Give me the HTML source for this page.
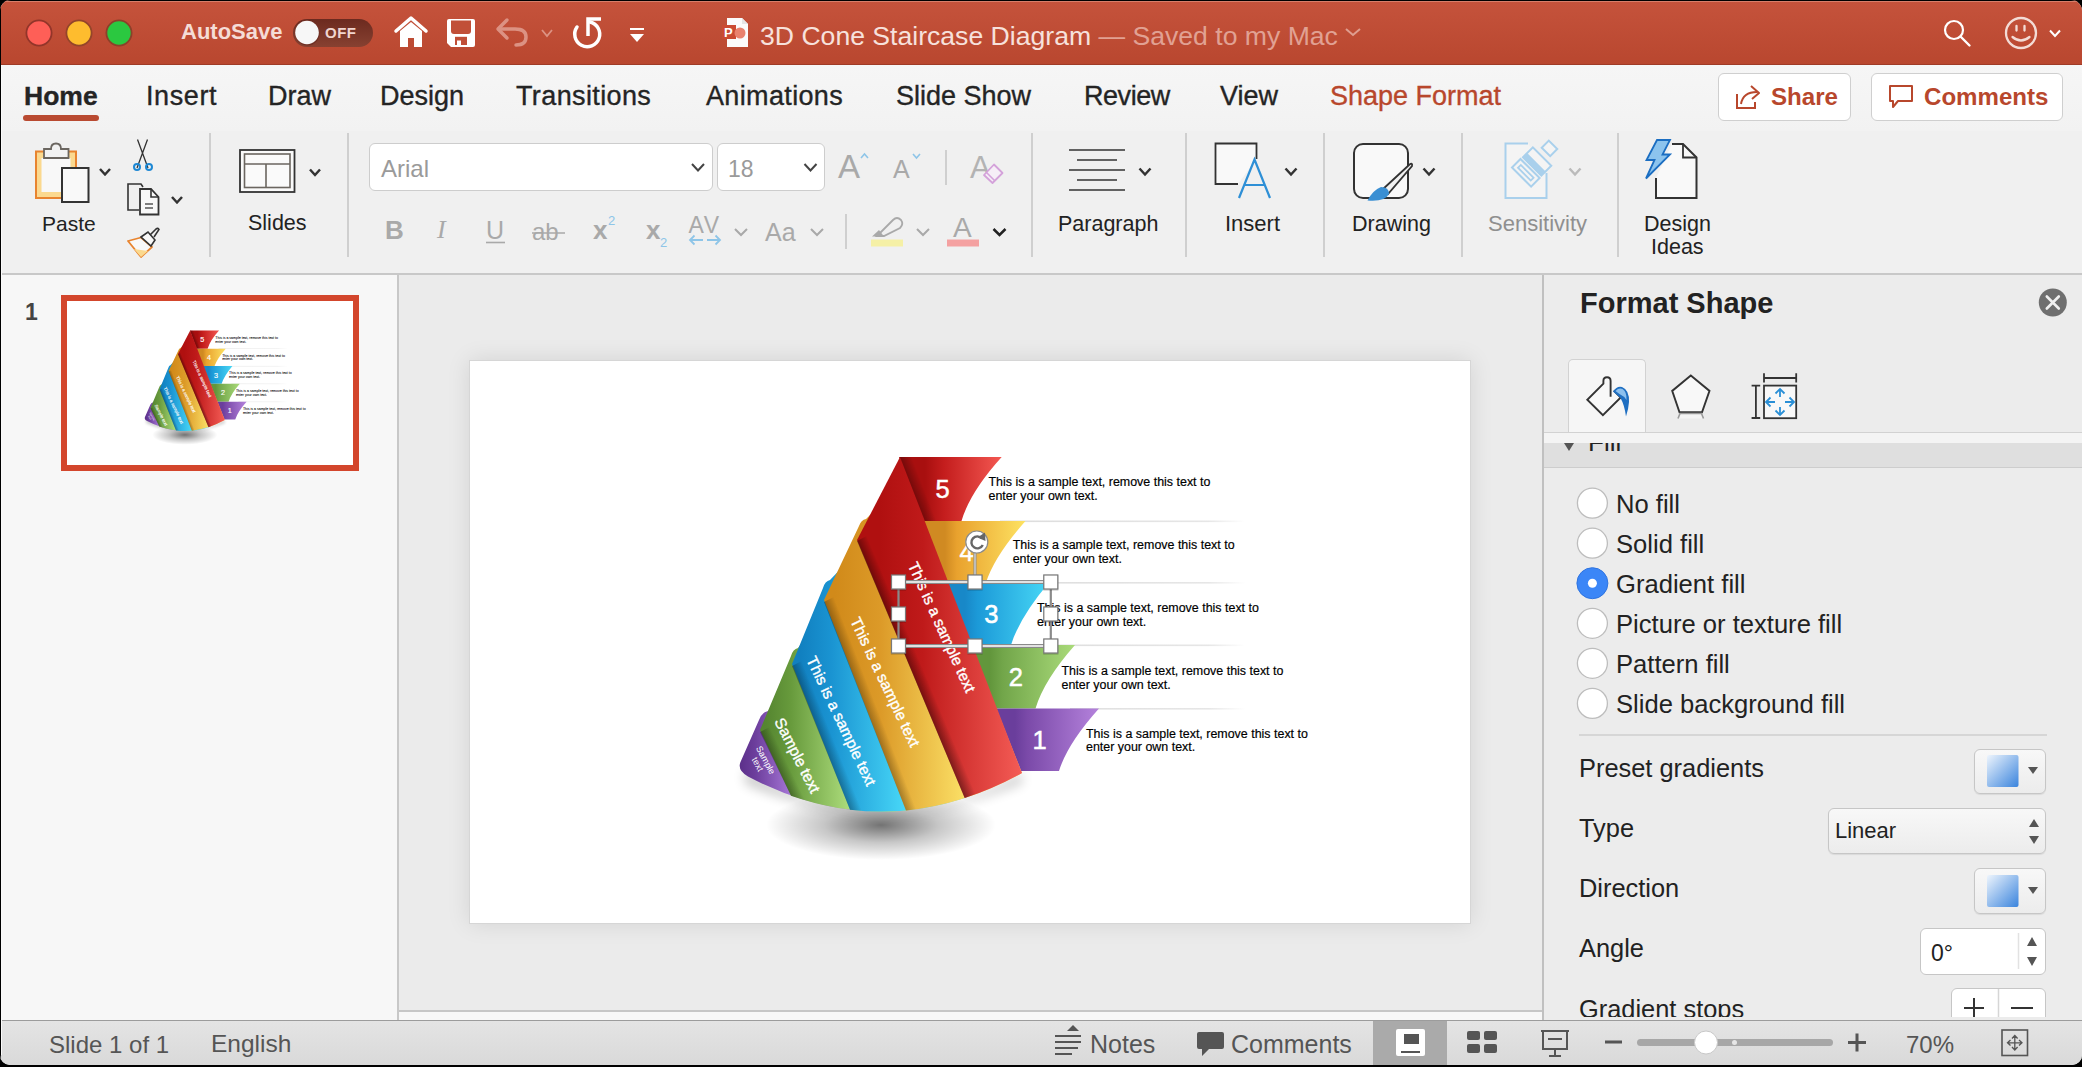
<!DOCTYPE html>
<html><head><meta charset="utf-8">
<style>
*{margin:0;padding:0;box-sizing:border-box}
html,body{width:2082px;height:1067px;overflow:hidden;background:#000;font-family:"Liberation Sans",sans-serif}
.a{position:absolute}
.t{position:absolute;white-space:nowrap;line-height:1}
svg{position:absolute;overflow:visible}
#win{position:absolute;left:0;top:0;width:2082px;height:1065px;border-radius:11px 11px 10px 10px;overflow:hidden;background:#f3f3f3}
#title{left:0;top:0;width:2082px;height:65px;background:linear-gradient(#c5533c,#b9472f);box-shadow:inset 0 1px 0 #000, inset 0 2px 0 #d77e6a;border-bottom:1px solid #9f3b27}
#tabs{left:0;top:65px;width:2082px;height:66px;background:linear-gradient(#f6f6f6,#f2f2f2)}
#ribbon{left:0;top:131px;width:2082px;height:144px;background:#f0f0f0;border-bottom:2px solid #c8c8c8}
#left{left:0;top:275px;width:399px;height:745px;background:#f7f7f7;border-right:2px solid #c8c8c8}
#canvas{left:399px;top:275px;width:1143px;height:745px;background:#ebebeb}
#right{left:1542px;top:275px;width:540px;height:745px;background:#ececec;border-left:2px solid #c0c0c0}
#status{left:0;top:1020px;width:2082px;height:45px;background:linear-gradient(#e4e4e4,#d9d9d9);border-top:1px solid #9c9c9c}
.tab{font-size:27px;color:#242424;top:83px;-webkit-text-stroke-width:0.35px}
</style></head><body>
<div id="win">
<div id="title" class="a"></div>
<!-- TITLE BAR -->
<svg style="left:0;top:0" width="2082" height="65">
 <circle cx="39" cy="33" r="12.6" fill="#fe5f57" stroke="#93352a" stroke-width="1.8"/>
 <circle cx="79" cy="33" r="12.6" fill="#febc2e" stroke="#94452a" stroke-width="1.8"/>
 <circle cx="119" cy="33" r="12.6" fill="#2bc840" stroke="#8c402a" stroke-width="1.8"/>
 <!-- toggle -->
 <defs><linearGradient id="tg" x1="0" y1="0" x2="0" y2="1"><stop offset="0" stop-color="#6c2a1f"/><stop offset="1" stop-color="#874131"/></linearGradient></defs>
 <rect x="293" y="19" width="80" height="28" rx="14" fill="url(#tg)"/>
 <circle cx="307.5" cy="33.5" r="12" fill="#5a2018" opacity=".5"/>
 <circle cx="307" cy="32.5" r="11.8" fill="#f7f7f7"/>
 <!-- home -->
 <path d="M396 31 L411 18 L426 31" fill="none" stroke="#fff" stroke-width="3.5" stroke-linecap="round" stroke-linejoin="round"/>
 <path d="M400 31 L411 22 L422 31 V47 H414 V38 H408 V47 H400 Z" fill="#fff"/>
 <!-- save -->
 <path d="M449 19 H473 Q475 19 475 21 V45 Q475 47 473 47 H451 L447 43 V21 Q447 19 449 19 Z" fill="#fff"/>
 <path d="M451 20.5 H471 V31 Q471 34 468 34 H454 Q451 34 451 31 Z" fill="#c14f38"/>
 <path d="M455 36.8 H467 V45 H455 Z" fill="#c04e37"/>
 <path d="M457 40.5 H461 V45 H457 Z" fill="#fff"/>
 <!-- undo -->
 <path d="M507 20 L498 29 L507 38" fill="none" stroke="#dc9283" stroke-width="3.5" stroke-linecap="round" stroke-linejoin="round"/>
 <path d="M499 29 H515 Q526 29 526 37 Q526 45 516 45" fill="none" stroke="#dc9283" stroke-width="3.5" stroke-linecap="round"/>
 <path d="M542 30 L547 36 L552 30" fill="none" stroke="#dc9283" stroke-width="1.8"/>
 <!-- redo circular -->
 <path d="M577 27 A 12.5 12.5 0 1 0 590 22" fill="none" stroke="#fff" stroke-width="3.5" stroke-linecap="round"/>
 <path d="M588 36 V19 H601" fill="none" stroke="#fff" stroke-width="3.5" stroke-linejoin="miter"/>
 <!-- customize -->
 <rect x="630" y="28" width="14" height="2" fill="#fff"/>
 <path d="M630 34 H644 L637 42 Z" fill="#fff"/>
 <!-- ppt doc icon -->
 <path d="M727 18 H742 L748 24 V47 H727 Z" fill="#fbfbfb"/>
 <path d="M742 18 V24 H748" fill="#e5e5e5"/>
 <rect x="722" y="25" width="14" height="14" fill="#cb4a32"/>
 <circle cx="740" cy="33" r="5.5" fill="#e9826e"/>
 <!-- search -->
 <circle cx="1954" cy="30" r="9" fill="none" stroke="#fff" stroke-width="2.2"/>
 <path d="M1960.5 36.5 L1969.5 45.5" stroke="#fff" stroke-width="2.4" stroke-linecap="round"/>
 <!-- smiley -->
 <circle cx="2021" cy="33" r="15" fill="none" stroke="#f3dcd6" stroke-width="2.3"/>
 <path d="M2016.5 26 V30.5 M2024.5 26 V30.5" stroke="#f3dcd6" stroke-width="2.3" stroke-linecap="round"/>
 <path d="M2012.5 37 Q2021 44 2029.5 37" fill="none" stroke="#f3dcd6" stroke-width="2.3" stroke-linecap="round"/>
 <path d="M2050 30.5 L2055 36 L2060 30.5" fill="none" stroke="#fff" stroke-width="2"/>
 <path d="M1346 29 L1353 35 L1360 29" fill="none" stroke="#df9e90" stroke-width="2"/>
</svg>
<div class="t" style="left:181px;top:21px;font-size:22px;font-weight:bold;color:#f5dcd6">AutoSave</div>
<div class="t" style="left:325px;top:25px;font-size:15px;font-weight:bold;color:#f0d5cf;letter-spacing:0.5px">OFF</div>
<div class="t" style="left:727px;top:733px;font-size:13px;font-weight:bold;color:#fff;left:724px;top:26px">P</div>
<div class="t" style="left:760px;top:22.5px;font-size:26.6px;color:#f7e1dc">3D Cone Staircase Diagram <span style="color:#e1a193">— Saved to my Mac</span></div>

<div id="tabs" class="a"></div>
<!-- TABS -->
<div class="t tab" style="left:24px;font-weight:bold;font-size:26.5px">Home</div>
<div class="a" style="left:23px;top:115px;width:76px;height:6px;border-radius:3px;background:#b94a31"></div>
<div class="t tab" style="left:146px;letter-spacing:0.6px">Insert</div>
<div class="t tab" style="left:268px">Draw</div>
<div class="t tab" style="left:380px">Design</div>
<div class="t tab" style="left:516px;letter-spacing:0.38px">Transitions</div>
<div class="t tab" style="left:706px;letter-spacing:0.35px">Animations</div>
<div class="t tab" style="left:896px">Slide Show</div>
<div class="t tab" style="left:1084px;letter-spacing:-0.45px">Review</div>
<div class="t tab" style="left:1220px">View</div>
<div class="t tab" style="left:1330px;color:#b8472c">Shape Format</div>
<div class="a" style="left:1718px;top:73px;width:133px;height:48px;border:1.5px solid #cfcfcf;border-radius:6px;background:#fff"></div>
<div class="a" style="left:1871px;top:73px;width:192px;height:48px;border:1.5px solid #cfcfcf;border-radius:6px;background:#fff"></div>
<div class="t" style="left:1771px;top:84.6px;font-size:24.1px;font-weight:bold;color:#b8472c">Share</div>
<div class="t" style="left:1924px;top:84.6px;font-size:24.1px;font-weight:bold;color:#b8472c">Comments</div>
<svg style="left:0;top:0" width="2082" height="140">
 <path d="M1737 94 V108 H1755 V102" fill="none" stroke="#b8472c" stroke-width="2"/>
 <path d="M1741 104 Q1743 92 1757 92" fill="none" stroke="#b8472c" stroke-width="2"/>
 <path d="M1751 86 L1759 93 L1752 99" fill="none" stroke="#b8472c" stroke-width="2" stroke-linejoin="round"/>
 <path d="M1890 86 H1912 V101 H1898 L1893 107 V101 H1890 Z" fill="none" stroke="#b8472c" stroke-width="2" stroke-linejoin="round"/>
</svg>

<div id="ribbon" class="a"></div>
<!-- RIBBON -->
<div class="t" style="left:42px;top:213.2px;font-size:21px;color:#222;font-weight:normal;">Paste</div>
<div class="t" style="left:248px;top:212.8px;font-size:21.5px;color:#222;font-weight:normal;">Slides</div>
<div class="t" style="left:1058px;top:213.8px;font-size:21.5px;color:#222;font-weight:normal;">Paragraph</div>
<div class="t" style="left:1225px;top:213.4px;font-size:22px;color:#222;font-weight:normal;">Insert</div>
<div class="t" style="left:1352px;top:213.8px;font-size:21.5px;color:#222;font-weight:normal;">Drawing</div>
<div class="t" style="left:1488px;top:213.4px;font-size:22px;color:#8f8f8f;font-weight:normal;">Sensitivity</div>
<div class="t" style="left:1644px;top:213.8px;font-size:21.5px;color:#222;font-weight:normal;">Design</div>
<div class="t" style="left:1651px;top:237.3px;font-size:21.5px;color:#222;font-weight:normal;">Ideas</div>
<div class="a" style="left:369px;top:143px;width:344px;height:48px;background:#fff;border:1px solid #cdcdcd;border-radius:6px"></div>
<div class="a" style="left:717px;top:143px;width:108px;height:48px;background:#fff;border:1px solid #cdcdcd;border-radius:6px"></div>
<div class="t" style="left:381px;top:156.7px;font-size:24px;color:#9a9a9a;font-weight:normal;">Arial</div>
<div class="t" style="left:728px;top:157.5px;font-size:23px;color:#9a9a9a;font-weight:normal;">18</div>
<div class="t" style="left:385px;top:217.0px;font-size:26px;color:#a9a9a9;font-weight:bold;">B</div>
<div class="t" style="left:437px;top:217.0px;font-size:26px;color:#a9a9a9;font-weight:normal;font-family:Liberation Serif,serif;font-style:italic">I</div>
<div class="t" style="left:486px;top:217.8px;font-size:25px;color:#a9a9a9;font-weight:normal;">U</div>
<div class="t" style="left:532px;top:219.7px;font-size:24px;color:#a9a9a9;font-weight:normal;">ab</div>
<div class="t" style="left:593px;top:217.0px;font-size:26px;color:#a9a9a9;font-weight:bold;">x</div>
<div class="t" style="left:608px;top:214.0px;font-size:13px;color:#8ec5e8;font-weight:normal;">2</div>
<div class="t" style="left:646px;top:217.0px;font-size:26px;color:#a9a9a9;font-weight:bold;">x</div>
<div class="t" style="left:660px;top:235.5px;font-size:13px;color:#8ec5e8;font-weight:normal;">2</div>
<div class="t" style="left:688.5px;top:214.4px;font-size:23px;letter-spacing:1.5px;color:#a9a9a9;font-weight:normal;">AV</div>
<div class="t" style="left:765px;top:219.8px;font-size:25px;color:#a9a9a9;font-weight:normal;">Aa</div>
<div class="t" style="left:838px;top:150.1px;font-size:33px;color:#a9a9a9;font-weight:normal;">A</div>
<div class="t" style="left:893px;top:156.8px;font-size:25px;color:#a9a9a9;font-weight:normal;">A</div>
<div class="t" style="left:970px;top:151.8px;font-size:31px;color:#b3b3b3;font-weight:normal;">A</div>
<div class="t" style="left:953px;top:213.8px;font-size:28px;color:#a9a9a9;font-weight:normal;">A</div>
<svg style="left:0;top:0" width="2082" height="280">
 <!-- separators -->
 <path d="M210 133 V257 M348 133 V257 M1032 133 V257 M1186 133 V257 M1324 133 V257 M1462 133 V257 M1618 133 V257" stroke="#cfcfcf" stroke-width="2"/>
 <path d="M946 150 V185 M846 214 V249" stroke="#cfcfcf" stroke-width="2"/>
 <!-- paste -->
 <rect x="36" y="151.5" width="40" height="46.5" fill="#fbd98f" stroke="#e8842f" stroke-width="2"/>
 <rect x="41.5" y="158" width="29" height="34" fill="#f8f8f8"/>
 <path d="M44 149 H51 Q51 143.5 56 143.5 Q61 143.5 61 149 H68.5 V158 H44 Z" fill="#f2f2f2" stroke="#6b6660" stroke-width="1.8"/>
 <rect x="62" y="168" width="26.5" height="34" fill="#f9f9f9" stroke="#333" stroke-width="2"/>
 <path d="M100 169 L105 174.5 L110 169" fill="none" stroke="#333" stroke-width="2.5"/>
 <!-- scissors -->
 <path d="M137.5 139.5 L148 168 M147.5 139.5 L137 168" stroke="#333" stroke-width="1.3"/>
 <circle cx="137" cy="167" r="3" fill="none" stroke="#1e88d4" stroke-width="2"/>
 <circle cx="149" cy="167" r="3" fill="none" stroke="#1e88d4" stroke-width="2"/>
 <!-- copy -->
 <path d="M139 184 H128 V210 H139" fill="none" stroke="#333" stroke-width="1.6"/>
 <path d="M139 184 H141 L143 187" fill="none" stroke="#333" stroke-width="1.6"/>
 <path d="M140 189 H151 L158.5 197 V214.5 H140 Z" fill="#f8f8f8" stroke="#333" stroke-width="1.8"/>
 <path d="M151 189 V197 H158.5" fill="none" stroke="#333" stroke-width="1.6"/>
 <path d="M145 204 H153 M145 208 H153" stroke="#555" stroke-width="1.3"/>
 <path d="M172 197 L177 202.5 L182 197" fill="none" stroke="#333" stroke-width="2.5"/>
 <!-- format painter -->
 <path d="M128 241 L141 237.5 L152 247 L141 257 Z" fill="#f8f8f8" stroke="#e8842f" stroke-width="1.8" stroke-linejoin="round"/>
 <path d="M134 249 L148 251 L141 257 Z" fill="#fbd98f"/>
 <path d="M141 237 L148 232 L155 240 L151 246 Z" fill="#f8f8f8" stroke="#333" stroke-width="1.6"/>
 <path d="M150 235 L156 229 Q158 227.5 159 229.5 L154 237" fill="none" stroke="#333" stroke-width="1.6"/>
 <!-- slides -->
 <rect x="240" y="150" width="54.5" height="42" fill="#fafafa" stroke="#333" stroke-width="1.8"/>
 <rect x="244.5" y="154" width="45.5" height="33.5" fill="none" stroke="#6b6660" stroke-width="1.6"/>
 <path d="M244.5 164 H290 M266 164 V187.5" stroke="#6b6660" stroke-width="1.6"/>
 <path d="M310 169.5 L315 175 L320 169.5" fill="none" stroke="#333" stroke-width="2.5"/>
 <!-- font box chevrons -->
 <path d="M692 164 L698 170.5 L704 164" fill="none" stroke="#444" stroke-width="2"/>
 <path d="M804.5 164 L810.5 170.5 L816.5 164" fill="none" stroke="#444" stroke-width="2"/>
 <!-- grow/shrink carets -->
 <path d="M861 158 L864.5 154 L868 158" fill="none" stroke="#8ec5e8" stroke-width="1.6"/>
 <path d="M913 154 L916.5 158 L920 154" fill="none" stroke="#8ec5e8" stroke-width="1.6"/>
 <!-- eraser -->
 <path d="M984 175 L994 164.5 L1002.5 173 L992.5 183 Z" fill="#f6eef7" stroke="#d4a2da" stroke-width="1.8" stroke-linejoin="round"/>
 <path d="M986.5 172.5 L995 181" stroke="#d4a2da" stroke-width="1.6"/>
 <!-- underline/strike -->
 <path d="M486 242.5 H505" stroke="#a9a9a9" stroke-width="1.6"/>
 <path d="M532 233 H565" stroke="#a9a9a9" stroke-width="1.6"/>
 <!-- AV arrows -->
 <path d="M690 240 H703 M694.5 235.5 L690 240 L694.5 244.5 M707 240 H720 M715.5 235.5 L720 240 L715.5 244.5" fill="none" stroke="#8ec5e8" stroke-width="1.8"/>
 <path d="M735 229 L741 235 L747 229" fill="none" stroke="#a9a9a9" stroke-width="2"/>
 <path d="M811 229 L817 235 L823 229" fill="none" stroke="#a9a9a9" stroke-width="2"/>
 <!-- highlighter -->
 <path d="M877 236 L893 220 Q897 216 901 220 Q904 224 900 228 L884 236 Z" fill="none" stroke="#a9a9a9" stroke-width="1.8"/>
 <path d="M872 236.5 L879 230 L884 236.5 Z" fill="#a9a9a9"/>
 <rect x="871" y="239.5" width="32" height="7" fill="#f5f0a6"/>
 <path d="M917 229 L923 235 L929 229" fill="none" stroke="#a9a9a9" stroke-width="2"/>
 <rect x="947" y="239.5" width="32" height="7" fill="#f4a1a1"/>
 <path d="M993.5 229 L999.5 235 L1005.5 229" fill="none" stroke="#222" stroke-width="2.5"/>
 <!-- paragraph -->
 <path d="M1069 150 H1125 M1077 160 H1117 M1069 170 H1125 M1077 180 H1117 M1069 190 H1125" stroke="#333" stroke-width="1.6"/>
 <path d="M1139.5 168.5 L1145 174.5 L1150.5 168.5" fill="none" stroke="#333" stroke-width="2.5"/>
 <!-- insert -->
 <path d="M1238 184 H1215.5 V143.5 H1256.5 V159" fill="#f9f9f9" stroke="#333" stroke-width="1.8"/>
 <path d="M1239 198 L1254.5 159.5 L1270 198 M1244.5 185 H1264.5" fill="none" stroke="#2e8fd6" stroke-width="2.2"/>
 <path d="M1285.5 168.5 L1291 174.5 L1296.5 168.5" fill="none" stroke="#333" stroke-width="2.5"/>
 <!-- drawing -->
 <rect x="1354" y="144" width="54" height="54" rx="9" fill="#f9f9f9" stroke="#333" stroke-width="2"/>
 <path d="M1382 190 L1409 165 Q1413 162 1412 166 L1388 194 Z" fill="#f2f2f2" stroke="#333" stroke-width="1.8"/>
 <path d="M1367.5 200.5 Q1373 190 1381 187 Q1389 187 1389 194 Q1385 202 1367.5 200.5 Z" fill="#3a8fd3"/>
 <path d="M1423.5 168.5 L1429 174.5 L1434.5 168.5" fill="none" stroke="#333" stroke-width="2.5"/>
 <!-- sensitivity -->
 <path d="M1528 143.5 H1505.5 V198 H1546.5 V173" fill="#f4f4f4" stroke="#a9d0ec" stroke-width="2"/>
 <g transform="translate(1535.7 162.9) rotate(-45)">
  <rect x="-20" y="-13.5" width="12" height="27" fill="#f4f4f4" stroke="#a9d0ec" stroke-width="2"/>
  <rect x="-16" y="-9" width="4" height="18" fill="none" stroke="#a9d0ec" stroke-width="1.8"/>
  <rect x="-5" y="-13" width="14" height="26" fill="#f4f4f4" stroke="#a9d0ec" stroke-width="2"/>
  <rect x="-5" y="-13" width="6" height="26" fill="#a9d0ec"/>
  <rect x="15" y="-6.5" width="10" height="12" fill="#f4f4f4" stroke="#a9d0ec" stroke-width="2"/>
 </g>
 <path d="M1569.5 168.5 L1575 174.5 L1580.5 168.5" fill="none" stroke="#bbb" stroke-width="2.5"/>
 <!-- design ideas -->
 <path d="M1672 144 H1683 L1696.5 157.5 V198 H1656 V178" fill="#f9f9f9" stroke="#333" stroke-width="2"/>
 <path d="M1683 144 V157.5 H1696.5" fill="none" stroke="#333" stroke-width="1.8"/>
 <path d="M1657 140 H1670 L1662.5 154.5 H1670 L1646 178.5 L1654.5 160 H1646.5 Z" fill="#8cc4ee" stroke="#1b6ec2" stroke-width="1.8" stroke-linejoin="miter"/>
</svg>

<div id="left" class="a"></div>
<!-- LEFT -->
<div class="t" style="left:25px;top:301.0px;font-size:23px;color:#444;font-weight:bold;">1</div>
<div class="a" style="left:61px;top:295px;width:298px;height:176px;border:6px solid #d3462c;background:#fff"></div>

<div id="canvas" class="a"></div>
<!-- SLIDE -->
<div class="a" style="left:469px;top:360px;width:1002px;height:564px;background:#fff;border:1px solid #d6d6d6;box-shadow:0 0 22px rgba(0,0,0,.10)"></div>
<svg style="left:0;top:0" width="2082" height="1067">
<defs>
<linearGradient id="t5" gradientUnits="userSpaceOnUse" x1="925" y1="0" x2="1000" y2="0"><stop offset="0" stop-color="#a80f0f"/><stop offset="0.25" stop-color="#c41d1d"/><stop offset="1" stop-color="#f25650"/></linearGradient>
<linearGradient id="t4" gradientUnits="userSpaceOnUse" x1="945" y1="0" x2="1025" y2="0"><stop offset="0" stop-color="#d08a22"/><stop offset="0.15" stop-color="#e9a22e"/><stop offset="1" stop-color="#fde262"/></linearGradient>
<linearGradient id="t3" gradientUnits="userSpaceOnUse" x1="965" y1="0" x2="1050" y2="0"><stop offset="0" stop-color="#1888c8"/><stop offset="0.15" stop-color="#1c9ad8"/><stop offset="1" stop-color="#48d8f6"/></linearGradient>
<linearGradient id="t2" gradientUnits="userSpaceOnUse" x1="990" y1="0" x2="1075" y2="0"><stop offset="0" stop-color="#62963c"/><stop offset="0.15" stop-color="#72a64a"/><stop offset="1" stop-color="#aadb7a"/></linearGradient>
<linearGradient id="t1" gradientUnits="userSpaceOnUse" x1="1015" y1="0" x2="1099" y2="0"><stop offset="0" stop-color="#6a3e9c"/><stop offset="0.15" stop-color="#7b4aa9"/><stop offset="1" stop-color="#b482dc"/></linearGradient>
<linearGradient id="b5" gradientUnits="userSpaceOnUse" x1="880" y1="0" x2="1022" y2="0"><stop offset="0" stop-color="#b01010"/><stop offset="0.3" stop-color="#bf1a1a"/><stop offset="1" stop-color="#f45c56"/></linearGradient>
<linearGradient id="b4" gradientUnits="userSpaceOnUse" x1="835" y1="0" x2="965" y2="0"><stop offset="0" stop-color="#d18a1a"/><stop offset="0.35" stop-color="#dc9a28"/><stop offset="1" stop-color="#fbe066"/></linearGradient>
<linearGradient id="b3" gradientUnits="userSpaceOnUse" x1="800" y1="0" x2="906" y2="0"><stop offset="0" stop-color="#1180c0"/><stop offset="0.3" stop-color="#1a94d2"/><stop offset="1" stop-color="#48d8f8"/></linearGradient>
<linearGradient id="b2" gradientUnits="userSpaceOnUse" x1="765" y1="0" x2="850" y2="0"><stop offset="0" stop-color="#558530"/><stop offset="0.3" stop-color="#679a3c"/><stop offset="1" stop-color="#addd7c"/></linearGradient>
<linearGradient id="b1" gradientUnits="userSpaceOnUse" x1="738" y1="0" x2="795" y2="0"><stop offset="0" stop-color="#5a2e88"/><stop offset="0.3" stop-color="#6c3e9c"/><stop offset="1" stop-color="#ac7cdc"/></linearGradient>
<linearGradient id="ss" gradientUnits="userSpaceOnUse" x1="0" y1="0" x2="1" y2="0"><stop offset="0" stop-color="#000"/><stop offset="1" stop-color="#000"/></linearGradient>
<linearGradient id="s5" gradientUnits="userSpaceOnUse" x1="857" y1="541" x2="867.2" y2="536.7"><stop offset="0" stop-color="#000" stop-opacity="0.38"/><stop offset="1" stop-color="#000" stop-opacity="0"/></linearGradient>
<linearGradient id="s4" gradientUnits="userSpaceOnUse" x1="824" y1="602" x2="834.3" y2="598.0"><stop offset="0" stop-color="#000" stop-opacity="0.3"/><stop offset="1" stop-color="#000" stop-opacity="0"/></linearGradient>
<linearGradient id="s3" gradientUnits="userSpaceOnUse" x1="792" y1="666" x2="802.2" y2="661.9"><stop offset="0" stop-color="#000" stop-opacity="0.3"/><stop offset="1" stop-color="#000" stop-opacity="0"/></linearGradient>
<linearGradient id="s2" gradientUnits="userSpaceOnUse" x1="760" y1="732" x2="769.9" y2="727.2"><stop offset="0" stop-color="#000" stop-opacity="0.3"/><stop offset="1" stop-color="#000" stop-opacity="0"/></linearGradient>
<linearGradient id="s0" gradientUnits="userSpaceOnUse" x1="900" y1="457" x2="910.3" y2="453.0"><stop offset="0" stop-color="#000" stop-opacity="0.3"/><stop offset="1" stop-color="#000" stop-opacity="0"/></linearGradient>
<filter id="blur6" x="-20%" y="-50%" width="140%" height="200%"><feGaussianBlur stdDeviation="6"/></filter>
<filter id="hs" x="-30%" y="-30%" width="160%" height="160%"><feDropShadow dx="0" dy="0.6" stdDeviation="0.6" flood-opacity="0.35"/></filter>
<radialGradient id="sh" cx="0.5" cy="0.5" r="0.5"><stop offset="0" stop-color="#000" stop-opacity=".55"/><stop offset=".5" stop-color="#000" stop-opacity=".22"/><stop offset="1" stop-color="#000" stop-opacity="0"/></radialGradient>
<linearGradient id="ln" gradientUnits="userSpaceOnUse" x1="1000" y1="0" x2="1245" y2="0"><stop offset="0" stop-color="#dcdcdc"/><stop offset="0.85" stop-color="#e6e6e6"/><stop offset="1" stop-color="#ffffff"/></linearGradient>
</defs>
<g id="diag">
<ellipse cx="881" cy="825" rx="115" ry="35" fill="url(#sh)"/>
<path d="M745 769.5 Q883.5 848.9 1022.0 773.0 L1022 783.0 Q881 841.6 745 783.5 Z" fill="#000" opacity="0.22" filter="url(#blur6)"/>
<rect x="1000" y="520.5" width="245" height="1.6" fill="url(#ln)"/>
<rect x="1020" y="582.0" width="225" height="1.6" fill="url(#ln)"/>
<rect x="1045" y="644.5" width="200" height="1.6" fill="url(#ln)"/>
<rect x="1070" y="708.0" width="175" height="1.6" fill="url(#ln)"/>
<path d="M899 457 H1001.7 Q970.0 492 961.5 521 H922 Z" fill="url(#t5)"/>
<path d="M880 521 H1025.5 Q994.5 556 986 582.5 H880 Z" fill="url(#t4)"/>
<path d="M880 582.5 H1049 Q1019.5 617.5 1011 645 H880 Z" fill="url(#t3)"/>
<path d="M880 645 H1075 Q1044.0 680 1035.5 708.5 H880 Z" fill="url(#t2)"/>
<path d="M880 708.5 H1099 Q1067.5 743.5 1059 771 H880 Z" fill="url(#t1)"/>
<path d="M768 711 Q762 712 759 720 L740.5 762 Q737 770 748 776.6 Q799.0 803.5 850.0 809.7 L800 690 Z" fill="url(#b1)"/>
<path d="M798 648 Q793 649 791 656 L760 730 L791.0 795.8 Q848.5 816.0 906.0 810.4 L835 600 Z" fill="url(#b2)"/>
<path d="M830 580 Q825 581 823 588 L792 664 L850.0 809.7 Q907.4 816.7 964.7 798.0 L868 540 Z" fill="url(#b3)"/>
<path d="M866 519 Q861 520 859 526 L824 600 L906.0 810.4 Q964.0 804.8 1022.0 773.0 L905 480 Z" fill="url(#b4)"/>
<path d="M900 457 L857 540 L964.7 798.0 Q993.4 788.7 1022.0 773.0 Z" fill="url(#b5)"/>
<path d="M857 541 L964.7 798.0 L978.7 793.1 L871 533.7 Z" fill="url(#s5)"/>
<path d="M824 602 L906.0 810.4 L920 808.7 L838 594.7 Z" fill="url(#s4)"/>
<path d="M792 666 L850.0 809.7 L864 811.0 L806 658.7 Z" fill="url(#s3)"/>
<path d="M760 732 L791.0 795.8 L805 800.3 L774 724.7 Z" fill="url(#s2)"/>
<path d="M900 457 L925 521 L939 521 L914 457 Z" fill="url(#s0)"/>
<text x="942.6" y="497.7" fill="#fff" stroke="#fff" stroke-width="0.5" font-size="25.5" text-anchor="middle" font-family="Liberation Sans">5</text>
<text x="966.7" y="560.7" fill="#fff" stroke="#fff" stroke-width="0.5" font-size="25.5" text-anchor="middle" font-family="Liberation Sans">4</text>
<text x="991.4" y="623.4" fill="#fff" stroke="#fff" stroke-width="0.5" font-size="25.5" text-anchor="middle" font-family="Liberation Sans">3</text>
<text x="1015.9" y="686.2" fill="#fff" stroke="#fff" stroke-width="0.5" font-size="25.5" text-anchor="middle" font-family="Liberation Sans">2</text>
<text x="1039.7" y="748.6" fill="#fff" stroke="#fff" stroke-width="0.5" font-size="25.5" text-anchor="middle" font-family="Liberation Sans">1</text>
<text x="988.5" y="486.3" fill="#000" stroke="#000" stroke-width="0.18" font-size="12.45" font-family="Liberation Sans">This is a sample text, remove this text to</text>
<text x="988.5" y="500.1" fill="#000" stroke="#000" stroke-width="0.18" font-size="12.45" font-family="Liberation Sans">enter your own text.</text>
<text x="1012.7" y="549" fill="#000" stroke="#000" stroke-width="0.18" font-size="12.45" font-family="Liberation Sans">This is a sample text, remove this text to</text>
<text x="1012.7" y="562.8" fill="#000" stroke="#000" stroke-width="0.18" font-size="12.45" font-family="Liberation Sans">enter your own text.</text>
<text x="1037" y="612.2" fill="#000" stroke="#000" stroke-width="0.18" font-size="12.45" font-family="Liberation Sans">This is a sample text, remove this text to</text>
<text x="1037" y="626.0" fill="#000" stroke="#000" stroke-width="0.18" font-size="12.45" font-family="Liberation Sans">enter your own text.</text>
<text x="1061.5" y="674.8" fill="#000" stroke="#000" stroke-width="0.18" font-size="12.45" font-family="Liberation Sans">This is a sample text, remove this text to</text>
<text x="1061.5" y="688.5999999999999" fill="#000" stroke="#000" stroke-width="0.18" font-size="12.45" font-family="Liberation Sans">enter your own text.</text>
<text x="1086" y="737.6" fill="#000" stroke="#000" stroke-width="0.18" font-size="12.45" font-family="Liberation Sans">This is a sample text, remove this text to</text>
<text x="1086" y="751.4" fill="#000" stroke="#000" stroke-width="0.18" font-size="12.45" font-family="Liberation Sans">enter your own text.</text>
<text transform="translate(941.9 627) rotate(65.5)" y="5.5" fill="#fff" stroke="#fff" stroke-width="0.35" font-size="15.5" text-anchor="middle" font-family="Liberation Sans">This is a sample text</text>
<text transform="translate(885.3 682) rotate(64.5)" y="5.5" fill="#fff" stroke="#fff" stroke-width="0.35" font-size="15.5" text-anchor="middle" font-family="Liberation Sans">This is a sample text</text>
<text transform="translate(841.5 721) rotate(64.5)" y="5.5" fill="#fff" stroke="#fff" stroke-width="0.35" font-size="15.5" text-anchor="middle" font-family="Liberation Sans">This is a sample text</text>
<text transform="translate(797.5 755.3) rotate(63)" y="5.5" fill="#fff" stroke="#fff" stroke-width="0.35" font-size="15.5" text-anchor="middle" font-family="Liberation Sans">Sample text</text>
<text transform="translate(762 762) rotate(62)" y="-1" fill="#fff" font-size="9" text-anchor="middle" font-family="Liberation Sans">Sample</text>
<text transform="translate(762 762) rotate(62)" y="8" fill="#fff" font-size="9" text-anchor="middle" font-family="Liberation Sans">text</text>
</g>
<g>
<path d="M898.5 582 H1050.8 M898.5 646 H1050.8" stroke="#8a8a8a" stroke-width="4"/><path d="M898.5 582 H1050.8 M898.5 646 H1050.8" stroke="#fff" stroke-width="1.5"/><path d="M898.5 582 V646 M1050.8 582 V646" stroke="#8a8a8a" stroke-width="2.2"/>
<path d="M975 553 V575" stroke="#8a8a8a" stroke-width="3"/><path d="M975 553 V575" stroke="#eee" stroke-width="1"/>
<rect x="891.5" y="575" width="14" height="14" fill="#fff" stroke="#7a7a7a" stroke-width="1.2" filter="url(#hs)"/>
<rect x="968" y="575" width="14" height="14" fill="#fff" stroke="#7a7a7a" stroke-width="1.2" filter="url(#hs)"/>
<rect x="1043.8" y="575" width="14" height="14" fill="#fff" stroke="#7a7a7a" stroke-width="1.2" filter="url(#hs)"/>
<rect x="891.5" y="607" width="14" height="14" fill="#fff" stroke="#7a7a7a" stroke-width="1.2" filter="url(#hs)"/>
<rect x="1043.8" y="607" width="14" height="14" fill="#fff" stroke="#7a7a7a" stroke-width="1.2" filter="url(#hs)"/>
<rect x="891.5" y="639" width="14" height="14" fill="#fff" stroke="#7a7a7a" stroke-width="1.2" filter="url(#hs)"/>
<rect x="968" y="639" width="14" height="14" fill="#fff" stroke="#7a7a7a" stroke-width="1.2" filter="url(#hs)"/>
<rect x="1043.8" y="639" width="14" height="14" fill="#fff" stroke="#7a7a7a" stroke-width="1.2" filter="url(#hs)"/>
<circle cx="976.8" cy="542" r="11" fill="#fff" stroke="#8a8a8a" stroke-width="1.2"/>
<path d="M982 538.5 A 6 6 0 1 0 982.8 545" fill="none" stroke="#666" stroke-width="2.4"/>
<path d="M977.5 537.5 L985 532.5 L985.5 541 Z" fill="#666"/>
</g>
</svg>
<div class="a" style="left:399px;top:1010px;width:1143px;height:2px;background:#c6c6c6"></div>
<div class="a" style="left:399px;top:1012px;width:1143px;height:8px;background:#f7f7f7"></div>

<div id="right" class="a"></div>
<svg style="left:0;top:0" width="400" height="500"><g transform="translate(68 303) scale(0.2835) translate(-469 -360)"><use href="#diag"/></g></svg>
<!-- RIGHT PANEL -->
<div class="a" style="left:1544px;top:275px;width:538px;height:742px;overflow:hidden">
<div class="t" style="left:36px;top:14.0px;font-size:29px;color:#222;font-weight:bold;">Format Shape</div>
<div class="a" style="left:24px;top:84px;width:78px;height:75px;background:#f6f6f6;border:1px solid #d2d2d2;border-bottom:none;border-radius:5px 5px 0 0"></div>
<div class="a" style="left:0;top:157px;width:538px;height:1px;background:#d2d2d2"></div>
<div class="a" style="left:0;top:158px;width:538px;height:10px;background:#f4f4f4"></div>
<div class="a" style="left:0;top:168px;width:538px;height:25px;background:#dfdfdf;border-bottom:1px solid #cdcdcd;overflow:hidden"><div class="t" style="left:44px;top:-14px;font-size:26px;color:#222">Fill</div></div>
<div class="t" style="left:72px;top:216.9px;font-size:25.6px;color:#222;font-weight:normal;">No fill</div>
<div class="t" style="left:72px;top:257.0px;font-size:25.6px;color:#222;font-weight:normal;">Solid fill</div>
<div class="t" style="left:72px;top:297.0px;font-size:25.6px;color:#222;font-weight:normal;">Gradient fill</div>
<div class="t" style="left:72px;top:337.1px;font-size:25.6px;color:#222;font-weight:normal;">Picture or texture fill</div>
<div class="t" style="left:72px;top:377.1px;font-size:25.6px;color:#222;font-weight:normal;">Pattern fill</div>
<div class="t" style="left:72px;top:417.2px;font-size:25.6px;color:#222;font-weight:normal;">Slide background fill</div>
<div class="a" style="left:35px;top:459px;width:468px;height:2px;background:#d6d6d6"></div>
<div class="t" style="left:35px;top:480.5px;font-size:25.4px;color:#222;font-weight:normal;">Preset gradients</div>
<div class="t" style="left:35px;top:540.5px;font-size:25.4px;color:#222;font-weight:normal;">Type</div>
<div class="t" style="left:35px;top:600.5px;font-size:25.4px;color:#222;font-weight:normal;">Direction</div>
<div class="t" style="left:35px;top:660.5px;font-size:25.4px;color:#222;font-weight:normal;">Angle</div>
<div class="t" style="left:35px;top:722.0px;font-size:25.4px;color:#222;font-weight:normal;">Gradient stops</div>
<div class="a" style="left:430px;top:473.5px;width:72px;height:45px;background:linear-gradient(#f8f8f8,#ececec);border:1px solid #c6c6c6;border-radius:6px;box-shadow:0 1px 1px rgba(0,0,0,.08)"></div>
<div class="a" style="left:284px;top:533px;width:218px;height:46px;background:linear-gradient(#f8f8f8,#ececec);border:1px solid #c6c6c6;border-radius:6px;box-shadow:0 1px 1px rgba(0,0,0,.08)"></div>
<div class="a" style="left:430px;top:593px;width:72px;height:46px;background:linear-gradient(#f8f8f8,#ececec);border:1px solid #c6c6c6;border-radius:6px;box-shadow:0 1px 1px rgba(0,0,0,.08)"></div>
<div class="a" style="left:376px;top:652.5px;width:126px;height:47px;background:#fff;border:1px solid #c6c6c6;border-radius:6px"></div>
<div class="a" style="left:407px;top:713px;width:95px;height:46px;background:#fff;border:1px solid #c6c6c6;border-radius:6px"></div>
<div class="t" style="left:291px;top:545.4px;font-size:22px;color:#222;font-weight:normal;">Linear</div>
<div class="t" style="left:387px;top:666.5px;font-size:23px;color:#222;font-weight:normal;">0°</div>
<svg style="left:0;top:0" width="538" height="745">
 <circle cx="508.8" cy="27.5" r="14" fill="#6f6f6f"/>
 <path d="M502.8000000000002 21.5 L514.8000000000002 33.5 M514.8000000000002 21.5 L502.8000000000002 33.5" stroke="#f0f0f0" stroke-width="2.6" stroke-linecap="round"/>
 <circle cx="48.40000000000009" cy="228.10000000000002" r="15" fill="#fff" stroke="#bdbdbd" stroke-width="1.3"/>
 <circle cx="48.40000000000009" cy="268.20000000000005" r="15" fill="#fff" stroke="#bdbdbd" stroke-width="1.3"/>
 <circle cx="48.40000000000009" cy="308.20000000000005" r="15.5" fill="#3b86f7" stroke="#2f74e0" stroke-width="1"/>
 <circle cx="48.40000000000009" cy="308.20000000000005" r="4.5" fill="#fff"/>
 <circle cx="48.40000000000009" cy="348.29999999999995" r="15" fill="#fff" stroke="#bdbdbd" stroke-width="1.3"/>
 <circle cx="48.40000000000009" cy="388.29999999999995" r="15" fill="#fff" stroke="#bdbdbd" stroke-width="1.3"/>
 <circle cx="48.40000000000009" cy="428.4" r="15" fill="#fff" stroke="#bdbdbd" stroke-width="1.3"/>
 <path d="M20 168 L30 168 L25 176 Z" fill="#555"/>
 <defs><linearGradient id="sw" x1="0" y1="0" x2="1" y2="1"><stop offset="0" stop-color="#eef5fd"/><stop offset="1" stop-color="#3a84dd"/></linearGradient></defs>
 <rect x="443" y="480" width="31.5" height="32" rx="2" fill="url(#sw)"/>
 <path d="M484 492 L494 492 L489 499 Z" fill="#555"/>
 <rect x="443" y="600" width="31.5" height="32" rx="2" fill="url(#sw)"/>
 <path d="M484 612 L494 612 L489 619 Z" fill="#555"/>
 <path d="M485 552 L495 552 L490 544 Z M485 561 L495 561 L490 569 Z" fill="#555"/>
 <path d="M474.5 658 V694" stroke="#e2e2e2" stroke-width="1.5"/>
 <path d="M483 671 L493 671 L488 662 Z M483 682 L493 682 L488 691 Z" fill="#555"/>
 <path d="M454.5 714 V745" stroke="#d6d6d6" stroke-width="1.5"/>
 <path d="M420 733 H440 M430 723 V743 M467 733 H489" stroke="#333" stroke-width="2"/>
 <g transform="translate(-1544 -275)">
  <path d="M1613.8 390.5 L1620.7 397.5 L1602.9 415.1 L1587.3 399.8 L1603.4 383.7 V381 Q1603.4 377.3 1607 377.3 Q1610.6 377.3 1610.6 381 V396.7" fill="#f8f8f8" stroke="#333" stroke-width="1.9" stroke-linejoin="miter"/>
  <path d="M1613 391.5 Q1617 385.5 1622 387 Q1629.5 390 1629 402 Q1628.5 409 1626 416.5 Q1624.5 405 1620.5 398 Z" fill="#1f6fc2"/>
  <path d="M1615.5 391 Q1619 387.5 1622.5 389 Q1627 392 1626.5 400 Q1624 396 1619.5 394 Z" fill="#8cc0ee"/>
  <path d="M1690.8 375.6 L1709.5 390.9 L1702 412.2 H1679.5 L1672.2 390.9 Z" fill="#f8f8f8" stroke="#333" stroke-width="1.9" stroke-linejoin="miter"/>
  <path d="M1678 418.5 L1680 413.5 H1701.5 L1703.5 418.5" fill="#f4f4f4" stroke="#9a9a9a" stroke-width="1.6"/>
  <path d="M1751.6 385.6 H1760.2 M1755.9 385.6 V418 M1751.6 418 H1760.2" stroke="#333" stroke-width="1.8"/>
  <path d="M1764 373.3 V382.5 M1764 378 H1796.2 M1796.2 373.3 V382.5" stroke="#333" stroke-width="1.8"/>
  <rect x="1764" y="385.6" width="32.2" height="32.6" fill="#f8f8f8" stroke="#333" stroke-width="1.8"/>
  <path d="M1766.5 402 H1775 M1785 402 H1793.5 M1780 389 V397 M1780 407 V415" stroke="#2a8fd6" stroke-width="1.8"/>
  <path d="M1770.5 397.5 L1766 402 L1770.5 406.5 M1789.5 397.5 L1794 402 L1789.5 406.5 M1775.5 393.5 L1780 389 L1784.5 393.5 M1775.5 410.5 L1780 415 L1784.5 410.5" fill="none" stroke="#2a8fd6" stroke-width="1.8"/>
 </g>
</svg>
</div>

<div id="status" class="a"></div>
<!-- STATUS -->
<div class="t" style="left:49px;top:1032.7px;font-size:24px;color:#555;font-weight:normal;">Slide 1 of 1</div>
<div class="t" style="left:211px;top:1032.3px;font-size:24.5px;color:#555;font-weight:normal;">English</div>
<div class="t" style="left:1090px;top:1031.8px;font-size:25px;color:#555;font-weight:normal;">Notes</div>
<div class="t" style="left:1231px;top:1031.8px;font-size:25px;color:#555;font-weight:normal;">Comments</div>
<div class="t" style="left:1906px;top:1032.7px;font-size:24px;color:#555;font-weight:normal;">70%</div>
<div class="a" style="left:1373px;top:1021px;width:74px;height:44px;background:#aaaaaa"></div>
<svg style="left:0;top:0" width="2082" height="1067">
 <path d="M1067 1031 L1073 1025 L1079 1031 Z" fill="#555"/>
 <path d="M1055 1036 H1081 M1055 1042 H1081 M1055 1048 H1078 M1055 1054 H1072" stroke="#555" stroke-width="2"/>
 <path d="M1199 1032 H1222 Q1224 1032 1224 1034 V1047 Q1224 1049 1222 1049 H1209 L1202 1056 V1049 H1199 Q1197 1049 1197 1047 V1034 Q1197 1032 1199 1032 Z" fill="#555"/>
 <rect x="1396" y="1029" width="29" height="27" rx="2" fill="#fff"/>
 <path d="M1401 1052 H1420" stroke="#555" stroke-width="2"/>
 <rect x="1404" y="1034" width="15" height="10" fill="#555"/>
 <rect x="1467" y="1031" width="13" height="9" rx="2" fill="#555"/><rect x="1484" y="1031" width="13" height="9" rx="2" fill="#555"/>
 <rect x="1467" y="1044" width="13" height="9" rx="2" fill="#555"/><rect x="1484" y="1044" width="13" height="9" rx="2" fill="#555"/>
 <path d="M1541 1031 H1569 M1543 1031 V1049 H1567 V1031 M1548 1039 H1562 M1555 1049 V1055 M1549 1056 H1561" fill="none" stroke="#555" stroke-width="2"/>
 <path d="M1605 1042 H1622" stroke="#555" stroke-width="3"/>
 <rect x="1637" y="1039" width="196" height="7" rx="3.5" fill="#a7a7a7"/>
 <circle cx="1734.5" cy="1042.5" r="2.5" fill="#e6e6e6"/>
 <circle cx="1706" cy="1042.5" r="11.5" fill="#fff" stroke="#c7c7c7" stroke-width="1"/>
 <path d="M1848 1042.5 H1866 M1857 1033.5 V1051.5" stroke="#555" stroke-width="3"/>
 <rect x="2002" y="1030" width="25.5" height="25.5" fill="none" stroke="#555" stroke-width="1.6"/>
 <path d="M2008 1042.8 H2021.5 M2014.8 1036 V1049.5 M2010.5 1040 L2007.5 1042.8 L2010.5 1045.6 M2019 1040 L2022 1042.8 L2019 1045.6 M2012 1038.5 L2014.8 1035.5 L2017.6 1038.5 M2012 1047 L2014.8 1050 L2017.6 1047" fill="none" stroke="#555" stroke-width="1.3"/>
</svg>

<div class="a" style="left:0;top:0;width:1px;height:1067px;background:#000"></div>
<div class="a" style="left:1px;top:65px;width:1px;height:990px;background:#fafafa"></div>
</div>
</body></html>
